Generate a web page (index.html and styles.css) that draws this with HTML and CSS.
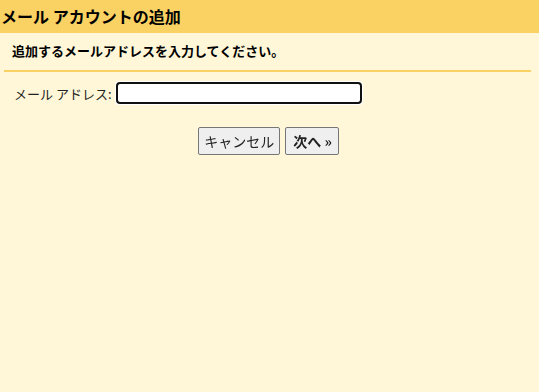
FILE: index.html
```html
<!DOCTYPE html>
<html lang="ja">
<head>
    <meta charset="UTF-8">
    <title>メール アカウントの追加</title>
    <link rel="stylesheet" href="styles.css">
</head>
<body>
    <div class="header">メール アカウントの追加</div>
    <div class="content">
        <p class="lead">追加するメールアドレスを入力してください。</p>
        <div class="field">
            <label for="email">メール アドレス:</label>
            <input type="text" id="email" autofocus>
        </div>
        <div class="actions">
            <button type="button">キャンセル</button>
            <button type="button" class="next">次へ »</button>
        </div>
    </div>
</body>
</html>
```

FILE: styles.css
```css
html, body {
    height: 100%;
}

body {
    margin: 0;
    background-color: #fff7d7;
    font-family: "Noto Sans CJK JP", "Noto Sans", sans-serif;
    font-size: 13px;
    color: #222;
}

.header {
    background-color: #fad163;
    height: 33px;
    line-height: 33px;
    padding-left: 1px;
    font-size: 16px;
    font-weight: bold;
    color: #000;
}

.content {
    padding: 0 8px 0 4px;
}

.lead {
    margin: 0;
    padding: 8px 0 10px 8px;
    font-weight: bold;
    color: #000;
    border-bottom: 2px solid #fad163;
}

.field {
    display: flex;
    align-items: center;
    padding: 10px 0 0 10px;
}

.field label {
    font-size: 13px;
    margin-right: 4px;
}

.field input {
    width: 242px;
    height: 18px;
    border: 2px solid #111;
    border-radius: 3px;
    padding: 0;
    background: #fff;
}

.actions {
    display: flex;
    justify-content: center;
    gap: 5px;
    padding-top: 23px;
    padding-left: 2px;
}

.actions button {
    font-family: "Noto Sans CJK JP", "Noto Sans", sans-serif;
    font-size: 14px;
    height: 28px;
    padding: 0 5px;
    background-color: #efefef;
    border: 1px solid #767676;
    border-radius: 2px;
    color: #222;
}

.actions .next {
    font-weight: bold;
    padding: 0 6px 0 7px;
}
```
